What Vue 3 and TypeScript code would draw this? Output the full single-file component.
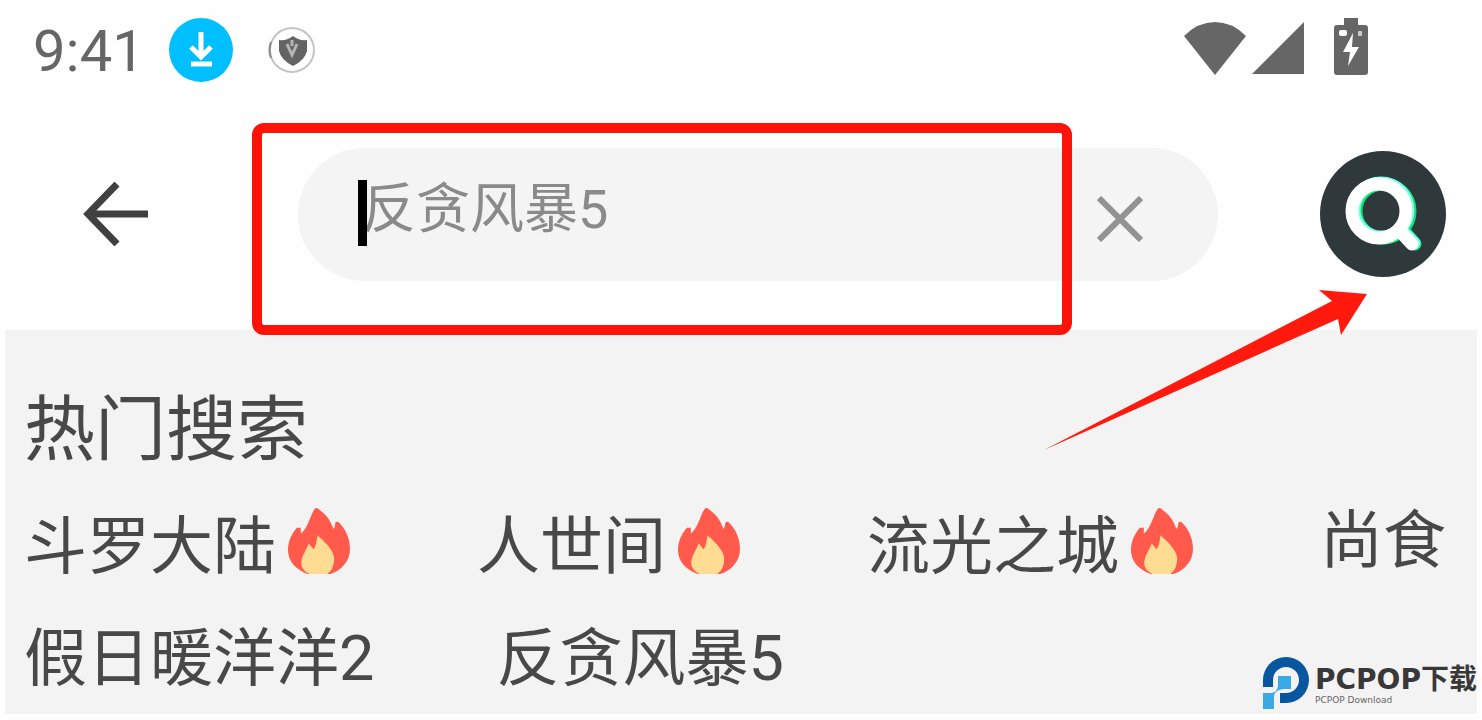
<script setup lang="ts">
import { ref } from 'vue'

interface HotItem {
  name: string
  hot: boolean
}

const keyword = ref('')
const items: HotItem[] = [
  { name: '斗罗大陆', hot: true },
  { name: '人世间', hot: true },
  { name: '流光之城', hot: true },
  { name: '尚食', hot: false },
  { name: '假日暖洋洋2', hot: false },
  { name: '反贪风暴5', hot: false },
]
</script>

<template>
  <div class="page">
    <div class="status">
      <span class="clock">9:41</span>
      <svg class="download" viewBox="0 0 64 64" aria-hidden="true">
        <circle cx="32" cy="32" r="32" fill="#00bfff" />
        <path d="M32 14V38M22 29L32 39L42 29" fill="none" stroke="#fff" stroke-width="5" />
        <path d="M22 46H43" stroke="#fff" stroke-width="5" />
      </svg>
      <svg class="shield" viewBox="0 0 48 48" aria-hidden="true">
        <circle cx="24" cy="24" r="22" fill="none" stroke="#c4c4c4" stroke-width="2" />
        <path d="M3 16Q0 24 3 32" fill="none" stroke="#888" stroke-width="2" />
        <path d="M11 14Q19 15 25 10Q31 15 39 14V25Q37 34 25 40Q13 34 11 25Z" fill="#646464" />
        <path d="M19 18L24 29L29 18M24 14V20" fill="none" stroke="#b5b5b5" stroke-width="3" />
      </svg>
      <span class="spacer"></span>
      <svg class="wifi" viewBox="0 0 62 53" aria-hidden="true">
        <path d="M0 14Q14 0 31 0T62 14L31 53Z" fill="#666" />
      </svg>
      <svg class="signal" viewBox="0 0 52 52" aria-hidden="true">
        <path d="M52 0V52H0Z" fill="#666" />
      </svg>
      <svg class="battery" viewBox="0 0 34 58" aria-hidden="true">
        <path d="M10 0H24V7H31Q34 7 34 10V54Q34 57 31 57H3Q0 57 0 54V10Q0 7 3 7H10Z" fill="#666" />
        <path d="M19 15L9 34H16L14 48L25 29H18Z" fill="#fff" />
        <rect x="5" y="12" width="8" height="6" rx="2" fill="#fff" />
        <rect x="24" y="13" width="4" height="5" rx="1" fill="#ccc" />
      </svg>
    </div>

    <header class="header">
      <button class="back" type="button" aria-label="返回">
        <svg viewBox="0 0 66 64" aria-hidden="true">
          <path d="M65 32H5M34 2L5 32L34 62" fill="none" stroke="#404040" stroke-width="7" />
        </svg>
      </button>
      <div class="field">
        <input v-model="keyword" class="input" type="text" placeholder="反贪风暴5" aria-label="搜索" />
        <span class="caret"></span>
        <button class="clear" type="button" aria-label="清除" @click="keyword = ''">
          <svg viewBox="0 0 46 46" aria-hidden="true">
            <path d="M2 2L44 44M44 2L2 44" stroke="#929292" stroke-width="6" />
          </svg>
        </button>
        <span class="frame"></span>
      </div>
      <div class="action">
        <button class="search" type="button" aria-label="搜索">
          <svg viewBox="0 0 126 126" aria-hidden="true">
            <circle cx="63" cy="63" r="63" fill="#2f383a" />
            <g fill="none" stroke-width="13" stroke-linecap="round">
              <g stroke="#12e06c">
                <circle cx="63" cy="60" r="27" />
                <path d="M84 80L95 93" />
              </g>
              <g stroke="#6ffff0">
                <circle cx="61" cy="59" r="27" />
                <path d="M82 80L94 92" />
              </g>
              <g stroke="#fff">
                <circle cx="59" cy="60" r="27" />
                <path d="M80 80L92 93" />
              </g>
            </g>
          </svg>
        </button>
        <svg class="pointer" viewBox="0 0 324 164" aria-hidden="true">
          <path d="M1 162L289 13L276 2L324 6L298 47L295 31Z" fill="#ff1a0d" />
        </svg>
      </div>
    </header>

    <main class="panel">
      <h1 class="title">热门搜索</h1>
      <div class="list">
        <button v-for="item in items" :key="item.name" class="item" :class="{ hot: item.hot }" type="button">
          {{ item.name }}
          <svg v-if="item.hot" class="flame" viewBox="0 0 63 67" aria-hidden="true">
            <path
              d="M27 1Q29 -1 31 1C38 6 43 12 46 21Q48 20 48 15Q50 13 52 15C60 23 63 33 63 42C63 54 54 64 43 67H20C8 63 0 54 0 43C0 33 4 26 9 20L13 20V26C20 21 22 9 27 1Z"
              fill="#ff5a4b"
            />
            <path
              d="M30 28C36 33 46 42 47 51Q47 62 40 67H22C15 64 12 58 14 52C15 47 19 42 21 36L26 42C29 38 29 33 30 28Z"
              fill="#ffdc93"
            />
          </svg>
        </button>
      </div>
    </main>

    <div class="brand">
      <svg class="mark" viewBox="0 0 46 52" aria-hidden="true">
        <path d="M0 30V23A23 23 0 1 1 23 46H17V36H23A13 13 0 1 0 10 23V30Z" fill="#0756a0" />
        <path d="M15 19H28V32H20Q11 33 11 40V52H0V36H8Q15 35 15 28Z" fill="#3ba9e4" />
      </svg>
      <div class="words">
        <span class="name">PCPOP下载</span>
        <span class="sub">PCPOP Download</span>
      </div>
    </div>
  </div>
</template>

<style>
body {
  margin: 0;
  background: #fefefe;
}
</style>

<style scoped>
.page {
  position: relative;
  box-sizing: border-box;
  min-height: 100vh;
  display: flex;
  flex-direction: column;
  padding: 0 5px 6px;
  background: #fefefe;
  color: #484848;
  font-family: Roboto, 'Noto Sans CJK SC', sans-serif;
}
button {
  padding: 0;
  border: 0;
  background: none;
  color: inherit;
  font: inherit;
  cursor: pointer;
}
svg {
  display: block;
  flex: none;
}
.status {
  display: flex;
  align-items: center;
  height: 100px;
  padding: 0 109px 0 28px;
}
.clock {
  padding-top: 2px;
  font-size: 58px;
  line-height: 64px;
  color: #666;
}
.download {
  width: 64px;
  margin-left: 24px;
}
.shield {
  width: 48px;
  margin-left: 35px;
}
.spacer {
  flex: 1;
}
.wifi {
  width: 62px;
  margin-bottom: 4px;
}
.signal {
  width: 52px;
  margin: 0 30px 4px 6px;
}
.battery {
  width: 34px;
  margin-bottom: 6px;
}
.header {
  display: flex;
  align-items: center;
  padding: 48px 31px 49px 78px;
}
.back {
  width: 66px;
  margin: 0 149px 2px 0;
}
.field {
  position: relative;
  flex: 1;
  min-width: 0;
  display: flex;
  align-items: center;
  height: 133px;
  padding-right: 75px;
  box-sizing: border-box;
  border-radius: 67px;
  background: #f4f4f4;
}
.input {
  flex: 1;
  min-width: 0;
  height: 133px;
  box-sizing: border-box;
  padding: 0 24px 10px 64px;
  border: 0;
  outline: 0;
  background: none;
  color: #484848;
  font-family: inherit;
  font-size: 54px;
}
.input::placeholder {
  color: #8a8a8a;
  opacity: 1;
}
.caret {
  position: absolute;
  left: 60px;
  top: 32px;
  width: 9px;
  height: 66px;
  background: #000;
}
.clear {
  width: 46px;
  padding-top: 8px;
}
.frame {
  position: absolute;
  inset: -25px 146px -54px -46px;
  border: 10px solid #ff1208;
  border-radius: 12px;
  pointer-events: none;
}
.action {
  position: relative;
  margin: 0 0 2px 102px;
}
.search {
  display: block;
  width: 126px;
  border-radius: 50%;
}
.pointer {
  position: absolute;
  right: 79px;
  top: 137px;
  width: 324px;
  pointer-events: none;
}
.panel {
  flex: 1;
  padding: 58px 19px 14px;
  background: #f3f3f3;
}
.title {
  margin: 0 0 32px;
  font-size: 71px;
  line-height: 84px;
  font-weight: 400;
}
.list {
  display: flex;
  flex-wrap: wrap;
  align-items: flex-start;
  gap: 32px 122px;
}
.item {
  display: flex;
  align-items: center;
  font-size: 63px;
  line-height: 74px;
}
.hot {
  height: 86px;
}
.flame {
  width: 62px;
  margin: 0 5px 12px 12px;
}
.brand {
  position: absolute;
  right: 2px;
  bottom: 11px;
  display: flex;
  align-items: center;
  gap: 6px;
  color: #383838;
}
.mark {
  width: 46px;
}
.words {
  display: flex;
  flex-direction: column;
  width: 165px;
  padding-top: 4px;
}
.name {
  font-family: 'DejaVu Sans', 'Noto Sans CJK SC', sans-serif;
  font-size: 28px;
  line-height: 30px;
  font-weight: 700;
  white-space: nowrap;
}
.sub {
  font-family: 'DejaVu Sans', sans-serif;
  font-size: 9px;
  line-height: 10px;
  color: #666;
}
</style>
